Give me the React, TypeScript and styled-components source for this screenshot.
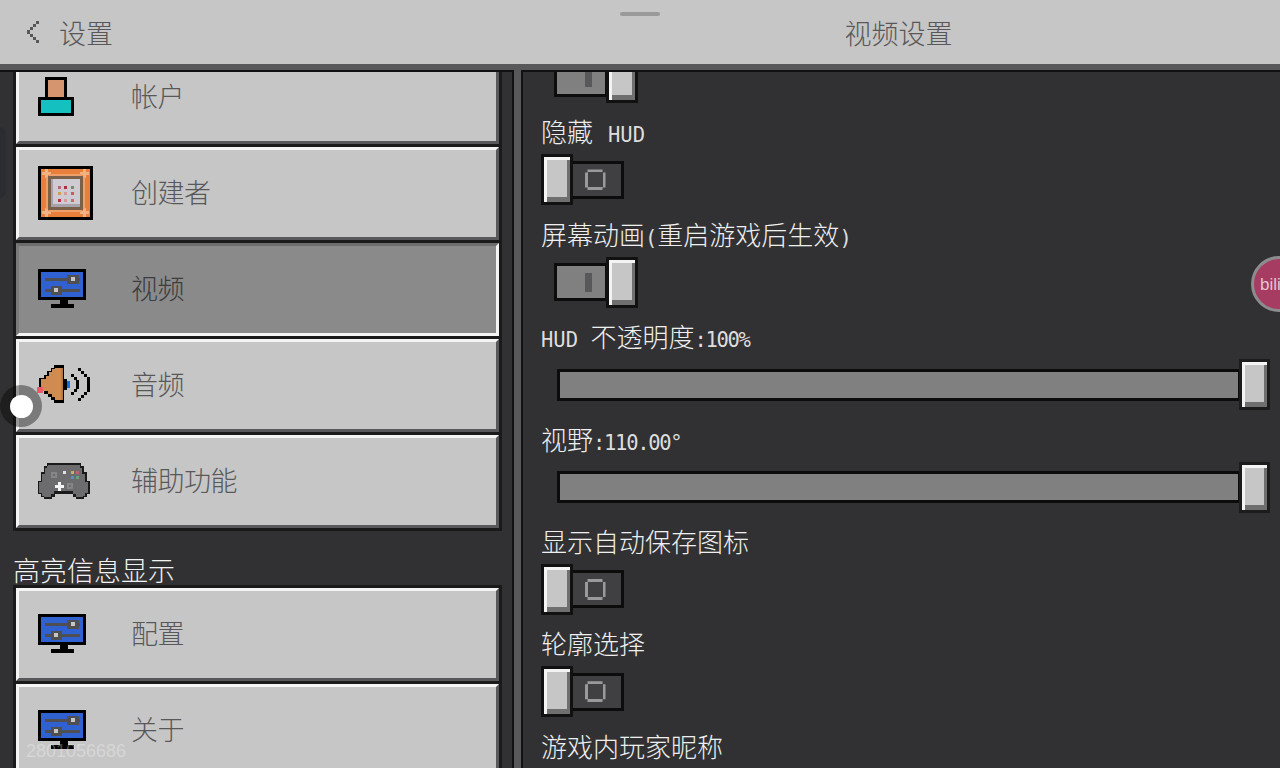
import React from "react";
import styled, { createGlobalStyle } from "styled-components";

const CJK = '"Noto Sans CJK SC", "Noto Sans", sans-serif';

const Global = createGlobalStyle`
  html, body { margin: 0; padding: 0; background: #313133; }
  #root { width: 1280px; height: 768px; }
  * { box-sizing: border-box; }
`;

const Screen = styled.div`
  position: relative;
  width: 1280px;
  height: 768px;
  overflow: hidden;
  display: flex;
  flex-direction: column;
  background: #58585a;
  font-family: ${CJK};
  font-weight: 300;
`;

const Header = styled.header`
  position: relative;
  flex: none;
  height: 70px;
  display: grid;
  grid-template-columns: 521px 1fr;
  align-items: center;
  background: #c6c6c6;
  border-bottom: 6px solid #58585a;
  color: #58585a;
  font-size: 27px;
`;

const BackArea = styled.div`
  display: flex;
  align-items: center;
  gap: 19px;
  padding-left: 25px;
`;

const HeaderTitle = styled.div`
  text-align: center;
  padding-right: 4px;
`;

const Handle = styled.div`
  position: absolute;
  left: 620px;
  top: 12px;
  width: 40px;
  height: 4px;
  border-radius: 2px;
  background: #9a9a9a;
`;

const Body = styled.main`
  flex: 1;
  min-height: 0;
  display: flex;
  gap: 7px;
  background: #58585a;
`;

const LeftPanel = styled.nav`
  flex: none;
  width: 514px;
  overflow: hidden;
  padding-left: 13px;
  padding-right: 10px;
  background: #313133;
  border-top: 2px solid #111113;
  border-right: 2px solid #111113;
`;

const LeftScroll = styled.div`
  margin-top: -24px;
`;

const Group = styled.div`
  display: flex;
  flex-direction: column;
  gap: 3px;
  padding: 3px;
  background: #1a1a1b;
`;

const NavButton = styled.div<{ $active?: boolean }>`
  flex: none;
  height: 93px;
  display: flex;
  align-items: center;
  padding-left: 19px;
  padding-bottom: 4px;
  font-size: 27px;
  letter-spacing: -0.5px;
  color: ${(p) => (p.$active ? "#3c3c3e" : "#58585a")};
  background: ${(p) => (p.$active ? "#8a8a8a" : "#c6c6c6")};
  border-style: solid;
  border-width: 3px;
  border-color: ${(p) =>
    p.$active ? "#6d6d6d #f4f4f4 #f4f4f4 #7a7a7a" : "#f4f4f4 #58585a #58585a #f4f4f4"};
`;

const IconSlot = styled.div`
  flex: none;
  width: 93px;
  margin-top: 2px;
  display: flex;
  align-items: center;
`;

const PixelSvg = styled.svg`
  display: block;
  shape-rendering: crispEdges;
  overflow: visible;
`;

const SectionLabel = styled.div`
  height: 54px;
  padding-top: 25px;
  font-size: 27px;
  line-height: 28px;
  color: #f2f2f2;
`;

const RightPanel = styled.section`
  flex: 1;
  min-width: 0;
  overflow: hidden;
  padding: 0 10px 0 18px;
  background: #313133;
  border-top: 2px solid #111113;
  border-left: 2px solid #111113;
`;

const RightScroll = styled.div`
  margin-top: -20px;
`;

const Setting = styled.div`
  margin-bottom: 7.4px;
`;

const Label = styled.div`
  height: 44px;
  line-height: 42px;
  font-size: 26px;
  color: #efefef;
  white-space: nowrap;
`;

const Latin = styled.span<{ $tight?: boolean }>`
  font-family: "DejaVu Sans Mono", monospace;
  font-size: 20.5px;
  font-weight: 400;
  color: #dedede;
  letter-spacing: ${(p) => (p.$tight ? "-1.3px" : "0")};
`;

const HudTag = styled(Latin)`
  margin-left: 15px;
`;

const Knob = styled.div`
  flex: none;
  position: relative;
  z-index: 1;
  width: 32px;
  height: 51px;
  background: #c6c6c6;
  border: 3px solid #111;
  box-shadow: inset 3px 3px 0 #f4f4f4, inset -3px -5px 0 #6f6f6f;
`;

const ToggleRow = styled.div<{ $on: boolean }>`
  display: flex;
  align-items: center;
  height: 51px;
  padding-left: ${(p) => (p.$on ? "13px" : "0")};
`;

const Track = styled.div<{ $on: boolean }>`
  flex: none;
  width: 54px;
  height: 38px;
  margin: ${(p) => (p.$on ? "0 -2px 0 0" : "0 0 0 -3px")};
  display: flex;
  align-items: center;
  justify-content: ${(p) => (p.$on ? "flex-end" : "center")};
  padding-right: ${(p) => (p.$on ? "13px" : "4px")};
  background: ${(p) => (p.$on ? "#808080" : "#404042")};
  border: 3px solid #0c0c0c;
`;

const OnMark = styled.div`
  width: 7px;
  height: 19px;
  background: #58585a;
`;

const OffMark = styled.div`
  width: 21px;
  height: 21px;
  background: #404042;
  border: 3px solid #9a9a9a;
  clip-path: polygon(3px 0, 18px 0, 18px 3px, 21px 3px, 21px 18px, 18px 18px, 18px 21px, 3px 21px, 3px 18px, 0 18px, 0 3px, 3px 3px);
`;

const SliderRow = styled.div`
  display: flex;
  align-items: center;
  height: 51px;
  width: 729px;
  padding-left: 16px;
`;

const SliderTrack = styled.div`
  flex: 1;
  height: 32px;
  margin-right: -2px;
  background: #808080;
  border: 3px solid #0c0c0c;
`;

const SliderKnob = styled(Knob)`
  width: 31px;
  border-color: #1c1c1d;
`;

const EdgeNotch = styled.div`
  position: absolute;
  left: -6px;
  top: 127px;
  width: 12px;
  height: 71px;
  border-radius: 6px;
  background: #2a2c2f;
  border: 1px solid #263036;
`;

const FloatDot = styled.div`
  position: absolute;
  left: 0;
  top: 385px;
  width: 42px;
  height: 42px;
  border-radius: 50%;
  display: flex;
  align-items: center;
  justify-content: center;
  background: rgba(0, 0, 0, 0.38);
`;

const FloatCore = styled.div`
  width: 23px;
  height: 23px;
  border-radius: 50%;
  background: #fff;
`;

const BiliBadge = styled.div`
  position: absolute;
  left: 1251px;
  top: 256px;
  width: 56px;
  height: 56px;
  display: flex;
  align-items: center;
  padding-left: 6px;
  border-radius: 50%;
  background: #a63c62;
  border: 3px solid #8c8c8e;
  color: #e4c4d0;
  font-family: "Liberation Sans", sans-serif;
  font-size: 17px;
  font-weight: 400;
  line-height: 1;
`;

const Watermark = styled.div`
  position: absolute;
  left: 26px;
  top: 741px;
  font-family: "Liberation Sans", sans-serif;
  font-size: 18px;
  font-weight: 400;
  line-height: 20px;
  color: rgba(255, 255, 255, 0.3);
`;

const Chevron = () => (
  <PixelSvg width="15" height="23" viewBox="0 0 15 23" fill="#58585a">
    <rect x="11" y="0" width="3" height="3" />
    <rect x="8" y="3" width="3" height="3" />
    <rect x="5" y="6" width="3" height="3" />
    <rect x="2" y="9" width="3" height="4" />
    <rect x="5" y="13" width="3" height="3" />
    <rect x="8" y="16" width="3" height="3" />
    <rect x="11" y="19" width="3" height="3" />
  </PixelSvg>
);

const AccountIcon = () => (
  <PixelSvg width="36" height="39" viewBox="0 0 36 39">
    <rect x="7" y="0" width="22" height="22" fill="#000" />
    <rect x="10" y="3" width="16" height="17" fill="#d4956f" />
    <rect x="0" y="20" width="36" height="19" fill="#000" />
    <rect x="3" y="23" width="30" height="13" fill="#14c0c0" />
  </PixelSvg>
);

const dots: [number, number, string][] = [
  [20, 20, "#b86a72"], [26, 20, "#a83040"], [33, 20, "#80886a"],
  [20, 26, "#d0a050"], [26, 26, "#d49a9a"], [33, 26, "#cc5a5a"],
  [20, 33, "#c03040"], [26, 33, "#d49a9a"], [33, 33, "#c86a6a"],
];

const CommandIcon = () => (
  <PixelSvg width="55" height="54" viewBox="0 0 55 54">
    <rect width="55" height="54" fill="#000" />
    <rect x="3" y="3" width="49" height="48" fill="#e8803c" />
    <path d="M7 3h3v3h3v3h-3v3h-3v-3h-3v-3h3zM45 3h3v3h3v3h-3v3h-3v-3h-3v-3h3zM7 42h3v3h3v3h-3v3h-3v-3h-3v-3h3zM45 42h3v3h3v3h-3v3h-3v-3h-3v-3h3z" fill="#f2b384" />
    <rect x="11" y="8" width="33" height="2" fill="#eea06a" />
    <rect x="11" y="44" width="33" height="2" fill="#eea06a" />
    <rect x="8" y="11" width="2" height="32" fill="#eea06a" />
    <rect x="45" y="11" width="2" height="32" fill="#eea06a" />
    <rect x="10" y="10" width="35" height="34" fill="#7a6048" />
    <rect x="13" y="13" width="29" height="28" fill="#a8a2ac" />
    <rect x="15" y="13" width="27" height="25" fill="#cfcbd3" />
    {dots.map(([x, y, c]) => (
      <rect key={`${x}-${y}`} x={x} y={y} width="3" height="3" fill={c} />
    ))}
  </PixelSvg>
);

const MonitorIcon = () => (
  <PixelSvg width="48" height="39" viewBox="0 0 48 39">
    <rect width="48" height="31" fill="#000" />
    <rect x="3" y="3" width="42" height="25" fill="#2f62d0" />
    <rect x="22" y="31" width="8" height="4" fill="#000" />
    <rect x="13" y="35" width="23" height="4" fill="#000" />
    <rect x="7" y="9" width="35" height="3" fill="#4f4f52" />
    <rect x="7" y="20" width="35" height="3" fill="#4f4f52" />
    <rect x="29" y="6" width="12" height="9" fill="#4f4f52" />
    <rect x="33" y="8" width="4" height="4" fill="#c6c6c6" />
    <rect x="13" y="17" width="11" height="9" fill="#4f4f52" />
    <rect x="16" y="19" width="4" height="4" fill="#c6c6c6" />
  </PixelSvg>
);

const AudioIcon = () => (
  <PixelSvg width="53" height="40" viewBox="0 0 53 40">
    <path d="M16 0h10v38h-10v-3h-3v-3h-3v-3h-4v-3h-5v-13h5v-3h3v-4h4v-3h3z" fill="#000" />
    <path d="M17 3h6v32h-6v-3h-3v-3h-4v-3h-5v-3h-2v-9h5v-3h3v-4h3v-3h3z" fill="#d08c50" />
    <rect x="23" y="3" width="2" height="32" fill="#b87a48" />
    <rect x="26" y="16" width="6" height="7" fill="#0f6fe0" />
    <rect x="26" y="14" width="3" height="11" fill="#000" />
    <rect x="-1" y="22" width="6" height="6" fill="#ea5a68" />
    <path d="M33 9h3v3h3v3h2v9h-2v3h-3v3h-3v-3h3v-3h2v-9h-2v-3h-3z" fill="#000" />
    <path d="M40 3h3v3h3v3h3v3h3v15h-3v3h-3v3h-3v3h-3v-3h3v-3h3v-3h3v-15h-3v-3h-3v-3h-3z" fill="#000" />
  </PixelSvg>
);

const GamepadIcon = () => (
  <PixelSvg width="52" height="36" viewBox="0 0 52 36">
    <path d="M9 0h34v3h3v6h3v9h3v13h-3v3h-3v2h-8v-2h-3v-3h-18v3h-3v2h-8v-2h-3v-3h-3v-13h3v-9h3v-6h3z" fill="#1a1a1a" />
    <path d="M10 2h32v3h2v6h3v8h3v11h-3v3h-2v1h-7v-3h-3v-3h-19v3h-3v3h-7v-1h-2v-3h-3v-11h3v-8h3v-6h2z" fill="#6c6c6e" />
    <rect x="13" y="9" width="6" height="6" fill="#858587" />
    <rect x="15" y="11" width="2" height="2" fill="#6c6c6e" />
    <rect x="25" y="8" width="3" height="3" fill="#e0e0e0" />
    <rect x="33" y="8" width="3" height="3" fill="#c8b060" />
    <rect x="38" y="8" width="3" height="3" fill="#c06070" />
    <rect x="33" y="13" width="3" height="3" fill="#5a90c0" />
    <rect x="38" y="13" width="3" height="3" fill="#70a078" />
    <rect x="20" y="19" width="3" height="9" fill="#f4f4f4" />
    <rect x="17" y="22" width="9" height="3" fill="#f4f4f4" />
    <rect x="29" y="20" width="6" height="6" fill="#858587" />
    <rect x="31" y="22" width="2" height="2" fill="#6c6c6e" />
  </PixelSvg>
);

const Toggle = ({ on }: { on: boolean }) =>
  on ? (
    <ToggleRow $on>
      <Track $on>
        <OnMark />
      </Track>
      <Knob />
    </ToggleRow>
  ) : (
    <ToggleRow $on={false}>
      <Knob />
      <Track $on={false}>
        <OffMark />
      </Track>
    </ToggleRow>
  );

const Slider = () => (
  <SliderRow>
    <SliderTrack />
    <SliderKnob />
  </SliderRow>
);

const topItems = [
  { icon: <AccountIcon />, text: "帐户" },
  { icon: <CommandIcon />, text: "创建者" },
  { icon: <MonitorIcon />, text: "视频", active: true },
  { icon: <AudioIcon />, text: "音频" },
  { icon: <GamepadIcon />, text: "辅助功能" },
];

const bottomItems = [
  { icon: <MonitorIcon />, text: "配置" },
  { icon: <MonitorIcon />, text: "关于" },
];

export default function App() {
  return (
    <Screen>
      <Global />
      <Header>
        <BackArea>
          <Chevron />
          <span>设置</span>
        </BackArea>
        <HeaderTitle>视频设置</HeaderTitle>
        <Handle />
      </Header>
      <Body>
        <LeftPanel>
          <LeftScroll>
            <Group>
              {topItems.map((it) => (
                <NavButton key={it.text} $active={it.active}>
                  <IconSlot>{it.icon}</IconSlot>
                  {it.text}
                </NavButton>
              ))}
            </Group>
            <SectionLabel>高亮信息显示</SectionLabel>
            <Group>
              {bottomItems.map((it) => (
                <NavButton key={it.text}>
                  <IconSlot>{it.icon}</IconSlot>
                  {it.text}
                </NavButton>
              ))}
            </Group>
          </LeftScroll>
        </LeftPanel>
        <RightPanel>
          <RightScroll>
            <Setting>
              <Toggle on />
            </Setting>
            <Setting>
              <Label>
                隐藏<HudTag>HUD</HudTag>
              </Label>
              <Toggle on={false} />
            </Setting>
            <Setting>
              <Label>
                屏幕动画<Latin>(</Latin>重启游戏后生效<Latin>)</Latin>
              </Label>
              <Toggle on />
            </Setting>
            <Setting>
              <Label>
                <Latin>HUD </Latin>不透明度<Latin $tight>:100%</Latin>
              </Label>
              <Slider />
            </Setting>
            <Setting>
              <Label>
                视野<Latin $tight>:110.00°</Latin>
              </Label>
              <Slider />
            </Setting>
            <Setting>
              <Label>显示自动保存图标</Label>
              <Toggle on={false} />
            </Setting>
            <Setting>
              <Label>轮廓选择</Label>
              <Toggle on={false} />
            </Setting>
            <Setting>
              <Label>游戏内玩家昵称</Label>
            </Setting>
          </RightScroll>
        </RightPanel>
      </Body>
      <EdgeNotch />
      <FloatDot>
        <FloatCore />
      </FloatDot>
      <BiliBadge>bili</BiliBadge>
      <Watermark>2801056686</Watermark>
    </Screen>
  );
}
